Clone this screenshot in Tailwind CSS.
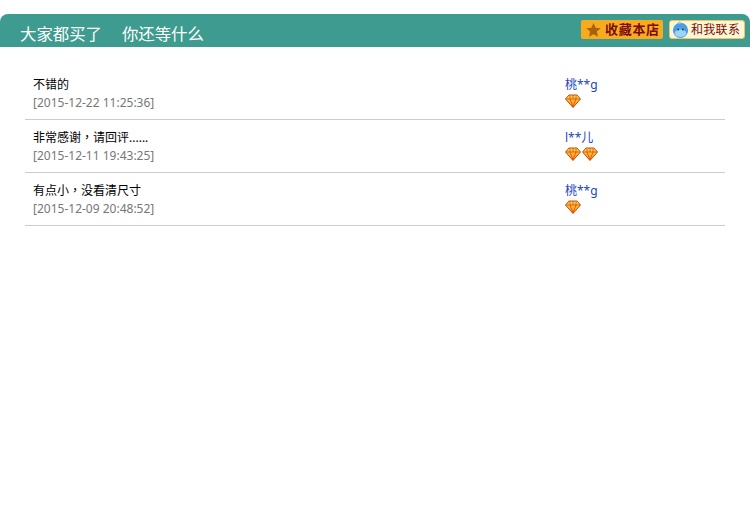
<!DOCTYPE html>
<html lang="zh">
<head>
  <meta charset="UTF-8" />
  <title>大家都买了 你还等什么</title>
  <script src="https://cdn.jsdelivr.net/npm/@tailwindcss/browser@4"></script>
</head>
<body class="bg-white font-['Noto_Sans','Noto_Sans_CJK_SC',sans-serif] overflow-hidden">

  <!-- 钻石图标 -->
  <svg width="0" height="0" class="absolute">
    <defs>
      <linearGradient id="gem" x1="0" y1="0" x2="0" y2="1">
        <stop offset="0" stop-color="#ffe050"/>
        <stop offset="0.6" stop-color="#ffb024"/>
        <stop offset="1" stop-color="#f98a1c"/>
      </linearGradient>
      <symbol id="diamond" viewBox="0 0 16 14">
        <path d="M4 1h8l3.500 4L8 13.500.5 5z" fill="url(#gem)" stroke="#b9500f"/>
        <path d="M1 5h14M5 5l3 8 3-8M5 1.500 5 5M11 1.500 11 5M8 1v4" fill="none" stroke="#e0431a" stroke-width=".8"/>
      </symbol>
    </defs>
  </svg>

  <!-- 标题栏 -->
  <div class="mt-[14px] h-[33px] bg-[#3d9b8f] rounded-t-[8px] flex justify-between">
    <div class="pl-5 pt-[8px] flex gap-5 text-white text-[16.400px] leading-[24px]">
      <span>大家都买了</span>
      <span>你还等什么</span>
    </div>
    <div class="flex gap-[6px] pt-[6px] pr-[5px]">
      <a class="w-[82px] h-[19px] bg-[#f9ab1f] rounded-[2px] flex items-center pl-[4px] gap-[3px] text-[#7a0c00] text-[13px] tracking-[0.700px] font-bold leading-none">
        <svg width="17" height="16" viewBox="0 0 24 24"><path d="M12 1.500l3.200 7 7.600.8-5.700 5.100 1.600 7.600L12 18.200 5.300 22l1.600-7.600L1.200 9.300l7.600-.8z" fill="#a8620c"/></svg>
        <span>收藏本店</span>
      </a>
      <a class="w-[76px] h-[19px] bg-[#fff6d8] border border-[#f6c25c] rounded-[3px] flex items-center text-[#7a0c00] text-[12px] tracking-[0.300px] leading-none">
        <svg class="ml-[1px] mr-[1px] mt-[-1px]" width="19" height="19" viewBox="0 0 20 20">
          <circle cx="10" cy="11" r="8" fill="#4a9fe0"/>
          <ellipse cx="10" cy="14" rx="6" ry="4" fill="#9fd4f5"/>
          <circle cx="7.500" cy="10" r="1" fill="#0f3f78"/>
          <circle cx="12.500" cy="10" r="1" fill="#0f3f78"/>
          <circle cx="9" cy="3" r="1.500" fill="#8cc8f0"/>
        </svg>
        <span>和我联系</span>
      </a>
    </div>
  </div>

  <!-- 评价列表 -->
  <ul class="mt-[20px] mx-[25px] text-[12px] leading-[18px]">
    <li class="h-[53px] border-b border-[#ccc] flex pl-2 pt-[9px]">
      <div class="w-[532px]">
        <p class="text-black">不错的</p>
        <p class="text-[#777]">[2015-12-22 11:25:36]</p>
      </div>
      <div>
        <a class="block text-[#1a44b8]">桃**g</a>
        <div class="flex gap-[1px]">
          <svg width="16" height="14"><use href="#diamond"/></svg>
        </div>
      </div>
    </li>
    <li class="h-[53px] border-b border-[#ccc] flex pl-2 pt-[9px]">
      <div class="w-[532px]">
        <p class="text-black">非常感谢<span lang="zh-TW" class="font-['Noto_Sans_CJK_TC'] leading-none">，</span>请回评......</p>
        <p class="text-[#777]">[2015-12-11 19:43:25]</p>
      </div>
      <div>
        <a class="block text-[#1a44b8]">l**儿</a>
        <div class="flex gap-[1px]">
          <svg width="16" height="14"><use href="#diamond"/></svg>
          <svg width="16" height="14"><use href="#diamond"/></svg>
        </div>
      </div>
    </li>
    <li class="h-[53px] border-b border-[#ccc] flex pl-2 pt-[9px]">
      <div class="w-[532px]">
        <p class="text-black">有点小<span lang="zh-TW" class="font-['Noto_Sans_CJK_TC'] leading-none">，</span>没看清尺寸</p>
        <p class="text-[#777]">[2015-12-09 20:48:52]</p>
      </div>
      <div>
        <a class="block text-[#1a44b8]">桃**g</a>
        <div class="flex gap-[1px]">
          <svg width="16" height="14"><use href="#diamond"/></svg>
        </div>
      </div>
    </li>
  </ul>

</body>
</html>
